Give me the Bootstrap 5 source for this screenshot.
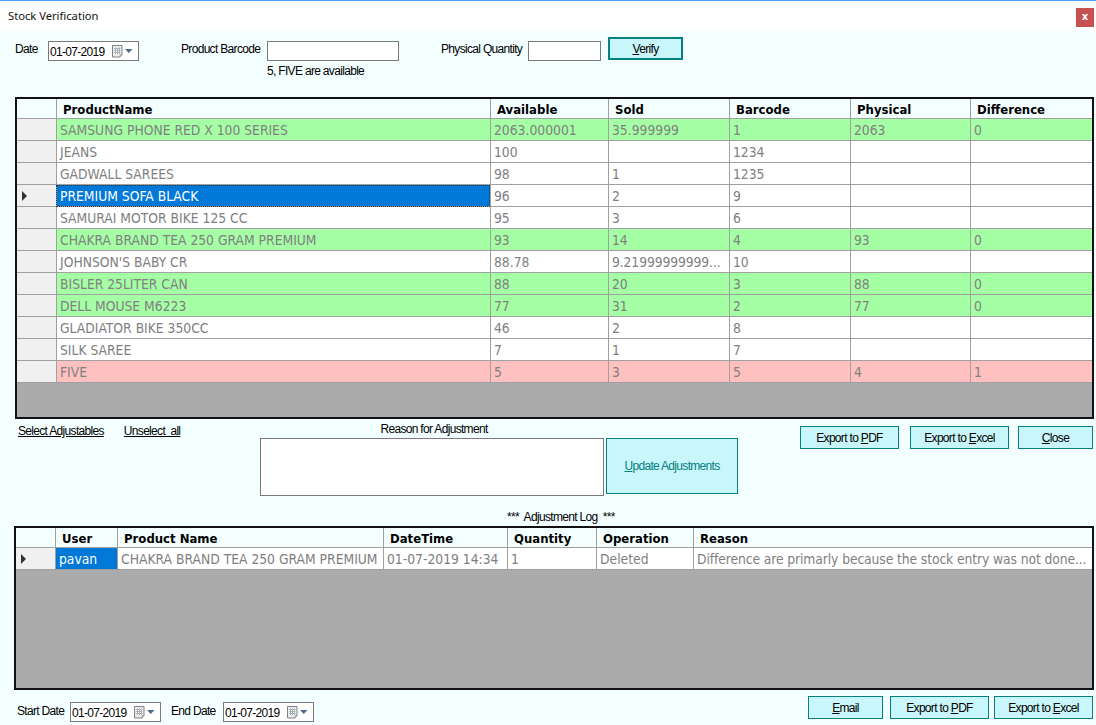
<!DOCTYPE html>
<html lang="en">
<head>
<meta charset="utf-8">
<title>Stock Verification</title>
<link href="https://cdn.jsdelivr.net/npm/bootstrap@5.3.0/dist/css/bootstrap.min.css" rel="stylesheet">
<style>
html,body{margin:0;padding:0;height:725px;overflow:hidden}
body{width:1096px;background:#f3ffff;font-family:"Liberation Sans",Arial,sans-serif;font-size:12px;letter-spacing:-.68px;color:#000;line-height:14px}
.winbar{height:31px;background:#fff;border-top:1px solid #4a9ff0;padding:8px 2px 0 8px}
.wintitle{font-family:"Noto Sans",sans-serif;font-size:11.2px;letter-spacing:0;line-height:14px;color:#111}
.winclose{width:18px;height:19px;background:#c75050;color:#fff;font:bold 10px/18px "DejaVu Sans",sans-serif;text-align:center;letter-spacing:0;margin-top:-1px}
.toprow{height:66px;padding-left:15px}
.lbl{white-space:nowrap}
.lb-date{margin-top:11px;width:33px}
.lb-bar{margin-top:11px;width:86px;margin-left:42px}
.lb-qty{margin-top:11px;width:87px;margin-left:42px}
.datebox{height:20px;width:91px;border:1px solid #7a7a7a;background:#fff;padding:3px 0 0 1px;white-space:nowrap}
.datebox svg{flex:none}
.d-top{margin-top:10px}
.winput{display:block;background:#fff;border:1px solid #7a7a7a;height:20px;border-radius:0;padding:0;box-shadow:none;min-height:0}
.in-bar{width:132px;margin-top:10px}
.in-qty{width:73px;margin-top:10px}
.hintwrap{width:132px}
.hinttext{margin-top:3px;white-space:nowrap}
.wbtn{background:#c8f6fa;border:1px solid #058080;border-radius:0;color:#000;font-size:12px;letter-spacing:-.68px;line-height:14px;padding:0;display:flex;align-items:center;justify-content:center}
.wbtn:hover{background:#c8f6fa;border-color:#058080;color:#000}
.btn-verify{width:75px;height:23px;border-width:2px;margin:6px 0 0 7px}
.gridbox{background:#ababab;border:2px solid #111;overflow:hidden}
.gridbox-a{margin:0 2px 0 15px;height:322px}
.gridbox-b{margin:0 2px 0 14px;height:164px}
.gridtab{table-layout:fixed;border-collapse:separate;border-spacing:0;width:100%;margin:0;font-family:"DejaVu Sans Condensed","DejaVu Sans",sans-serif;font-stretch:condensed;letter-spacing:0;font-size:13.75px;color:#808080;--bs-table-bg:transparent;--bs-table-color:#808080}
.gridtab th{font-family:"DejaVu Sans Condensed","DejaVu Sans",sans-serif;font-stretch:condensed;font-weight:700;font-size:13px;color:#000;background:#f3ffff;padding:2px 0 0 6px;height:20px;line-height:17px;border:0;border-bottom:1px solid #a0a0a0;white-space:nowrap;overflow:hidden}
.gridtab th+th{border-left:1px solid #a0a0a0}
.gridtab td{padding:1px 0 0 3px;height:22px;line-height:20px;border:0;border-bottom:1px solid #a0a0a0;border-left:1px solid #a0a0a0;background:#fff;white-space:nowrap;overflow:hidden;color:#808080;vertical-align:middle}
.gridtab td.rh{background:#f0f0f0;border-left:0;padding:0}
.gridtab tr.ok td:not(.rh){background:#a5ffa5}
.gridtab tr.bad td:not(.rh){background:#ffc0c0}
.gridtab td.sel{background:#0078d7!important;color:#fff}
.gridtab td.focuscell{outline:1px dotted #333;outline-offset:-1px}
.gridtab td.longcell{letter-spacing:-.1px}
.arrow{display:block;width:0;height:0;border-style:solid;border-width:5px 0 5px 5px;border-color:transparent transparent transparent #333;margin-left:5px}
.midrow{height:107px;padding-left:18px}
.lk{color:#000;text-decoration:underline;white-space:pre}
.linkset{margin-top:5px;width:242px;gap:20px}
.reasoncol{width:346px;padding-top:3px}
.reasonlbl{text-align:center;width:348px}
.reasonarea{width:344px;height:58px;margin-top:2px;resize:none}
.btn-update{width:132px;height:56px;margin:19px 0 0 0;color:#058080;flex:none}
.btn-update:hover{color:#058080}
.mid-btns{margin-left:62px;padding-top:7px}
.b-pdf{width:99px;height:23px}
.b-xl{width:99px;height:23px;margin-left:11px}
.b-close{width:75px;height:23px;margin-left:9px}
.logtitle{margin:14px 0 0 247px;width:120px;white-space:pre;font-size:12px}
.botrow{height:35px;padding-left:17px}
.lb-start{width:53px;margin-top:14px}
.lb-end{width:52px;margin:14px 0 0 10px}
.date-b{margin-top:12px}
.bot-btns{margin-left:auto;margin-right:3px;padding-top:6px}
.b-email{width:75px;height:23px}
.b-p2{width:99px;height:23px;margin-left:7px}
.b-x2{width:99px;height:23px;margin-left:5px}
</style>
</head>
<body>
<svg width="0" height="0" class="d-block" aria-hidden="true"><defs><symbol id="calicon" viewBox="0 0 26 14"><path d="M.5.500h9.500v9l-2 2.500H.5z" fill="#e9ebee" stroke="#808080"/><path d="M2 2.500h6.500v6.500H2z" fill="#fff"/><path d="M2 3.500h6.500M2 5.500h6.500M2 7.500h6.500M3.500 2.500v6.500M5.500 2.500v6.500M7.500 2.500v6.500" stroke="#aab0b8"/><path d="M8 12l2-2.500H8z" fill="#c4c4c4" stroke="#909090" stroke-width=".5"/><path d="M13 4h7.500l-3.750 4z" fill="#4a6a90"/></symbol></defs></svg>
<div class="winbar d-flex justify-content-between">
  <div class="wintitle">Stock Verification</div>
  <div class="winclose">x</div>
</div>

<div class="toprow d-flex align-items-start">
  <div class="lbl lb-date">Date</div>
  <div class="datebox d-top d-flex align-items-start"><span class="flex-grow-1">01-07-2019</span>
    <svg width="26" height="14"><use href="#calicon"/></svg>
  </div>
  <div class="lbl lb-bar">Product Barcode</div>
  <div class="hintwrap">
    <input class="winput form-control in-bar" type="text" aria-label="Product Barcode">
    <div class="hinttext">5, FIVE are available</div>
  </div>
  <div class="lbl lb-qty">Physical Quantity</div>
  <input class="winput form-control in-qty" type="text" aria-label="Physical Quantity">
  <button class="btn wbtn btn-verify" type="button"><span><u>V</u>erify</span></button>
</div>

<div class="gridbox gridbox-a">
  <table class="table gridtab">
    <colgroup><col style="width:39px"><col style="width:434px"><col style="width:118px"><col style="width:121px"><col style="width:121px"><col style="width:120px"><col></colgroup>
    <thead><tr><th></th><th>ProductName</th><th>Available</th><th>Sold</th><th>Barcode</th><th>Physical</th><th>Difference</th></tr></thead>
    <tbody>
      <tr class="ok"><td class="rh"></td><td>SAMSUNG PHONE RED X 100 SERIES</td><td>2063.000001</td><td>35.999999</td><td>1</td><td>2063</td><td>0</td></tr>
      <tr><td class="rh"></td><td>JEANS</td><td>100</td><td></td><td>1234</td><td></td><td></td></tr>
      <tr><td class="rh"></td><td>GADWALL SAREES</td><td>98</td><td>1</td><td>1235</td><td></td><td></td></tr>
      <tr><td class="rh"><span class="arrow"></span></td><td class="sel focuscell">PREMIUM SOFA BLACK</td><td>96</td><td>2</td><td>9</td><td></td><td></td></tr>
      <tr><td class="rh"></td><td>SAMURAI MOTOR BIKE 125 CC</td><td>95</td><td>3</td><td>6</td><td></td><td></td></tr>
      <tr class="ok"><td class="rh"></td><td>CHAKRA BRAND TEA 250 GRAM PREMIUM</td><td>93</td><td>14</td><td>4</td><td>93</td><td>0</td></tr>
      <tr><td class="rh"></td><td>JOHNSON'S BABY CR</td><td>88.78</td><td class="longcell">9.21999999999...</td><td>10</td><td></td><td></td></tr>
      <tr class="ok"><td class="rh"></td><td>BISLER 25LITER CAN</td><td>88</td><td>20</td><td>3</td><td>88</td><td>0</td></tr>
      <tr class="ok"><td class="rh"></td><td>DELL MOUSE M6223</td><td>77</td><td>31</td><td>2</td><td>77</td><td>0</td></tr>
      <tr><td class="rh"></td><td>GLADIATOR BIKE 350CC</td><td>46</td><td>2</td><td>8</td><td></td><td></td></tr>
      <tr><td class="rh"></td><td>SILK SAREE</td><td>7</td><td>1</td><td>7</td><td></td><td></td></tr>
      <tr class="bad"><td class="rh"></td><td>FIVE</td><td>5</td><td>3</td><td>5</td><td>4</td><td>1</td></tr>
    </tbody>
  </table>
</div>

<div class="midrow d-flex align-items-start">
  <div class="linkset d-flex"><a class="lk" href="#">Select Adjustables</a><a class="lk" href="#">Unselect  all</a></div>
  <div class="reasoncol">
    <div class="reasonlbl">Reason for Adjustment</div>
    <textarea class="winput form-control reasonarea" aria-label="Reason for Adjustment"></textarea>
    <div class="logtitle">***  Adjustment Log  ***</div>
  </div>
  <button class="btn wbtn btn-update" type="button"><span><u>U</u>pdate Adjustments</span></button>
  <div class="mid-btns d-flex">
    <button class="btn wbtn b-pdf" type="button"><span>Export to <u>P</u>DF</span></button>
    <button class="btn wbtn b-xl" type="button"><span>Export to <u>E</u>xcel</span></button>
    <button class="btn wbtn b-close" type="button"><span><u>C</u>lose</span></button>
  </div>
</div>

<div class="gridbox gridbox-b">
  <table class="table gridtab">
    <colgroup><col style="width:39px"><col style="width:62px"><col style="width:266px"><col style="width:124px"><col style="width:89px"><col style="width:97px"><col></colgroup>
    <thead><tr><th></th><th>User</th><th>Product Name</th><th>DateTime</th><th>Quantity</th><th>Operation</th><th>Reason</th></tr></thead>
    <tbody>
      <tr><td class="rh"><span class="arrow"></span></td><td class="sel">pavan</td><td>CHAKRA BRAND TEA 250 GRAM PREMIUM</td><td>01-07-2019 14:34</td><td>1</td><td>Deleted</td><td class="longcell">Difference are primarly because the stock entry was not done...</td></tr>
    </tbody>
  </table>
</div>

<div class="botrow d-flex align-items-start">
  <div class="lbl lb-start">Start Date</div>
  <div class="datebox date-b d-flex align-items-start"><span class="flex-grow-1">01-07-2019</span>
    <svg width="26" height="14"><use href="#calicon"/></svg>
  </div>
  <div class="lbl lb-end">End Date</div>
  <div class="datebox date-b d-flex align-items-start"><span class="flex-grow-1">01-07-2019</span>
    <svg width="26" height="14"><use href="#calicon"/></svg>
  </div>
  <div class="bot-btns d-flex">
    <button class="btn wbtn b-email" type="button"><span><u>E</u>mail</span></button>
    <button class="btn wbtn b-p2" type="button"><span>Export to <u>P</u>DF</span></button>
    <button class="btn wbtn b-x2" type="button"><span>Export to <u>E</u>xcel</span></button>
  </div>
</div>
<script src="https://cdn.jsdelivr.net/npm/bootstrap@5.3.0/dist/js/bootstrap.bundle.min.js"></script>
</body>
</html>
